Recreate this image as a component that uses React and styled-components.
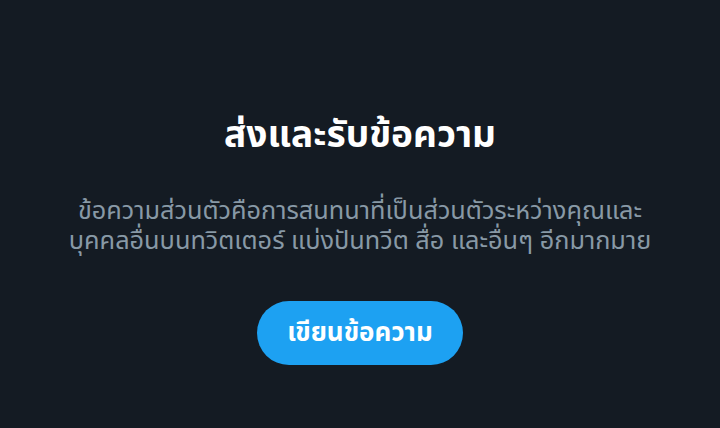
import React from "react";
import styled, { createGlobalStyle } from "styled-components";

const GlobalStyle = createGlobalStyle`
  html, body {
    margin: 0;
    padding: 0;
    background-color: #141b23;
  }
  body {
    font-family: "Noto Sans", "Noto Sans Thai", "DejaVu Sans", sans-serif;
  }
`;

const App = () => {
  return (
    <Container>
      <GlobalStyle />
      <Title>ส่งและรับข้อความ</Title>
      <Description>
        <Line>ข้อความส่วนตัวคือการสนทนาที่เป็นส่วนตัวระหว่างคุณและ</Line>
        <Line>บุคคลอื่นบนทวิตเตอร์ แบ่งปันทวีต สื่อ และอื่นๆ อีกมากมาย</Line>
      </Description>
      <Button>เขียนข้อความ</Button>
    </Container>
  );
};

const Container = styled.div`
  width: 720px;
  height: 428px;
  display: flex;
  flex-direction: column;
  align-items: center;
  padding-top: 111px;
  box-sizing: border-box;
`;

const Title = styled.h1`
  margin: 0;
  color: #ffffff;
  font-size: 37px;
  font-weight: 700;
  line-height: 44px;
`;

const Description = styled.div`
  margin-top: 39px;
  display: flex;
  flex-direction: column;
  align-items: center;
  color: #8899a6;
  font-size: 25.3px;
  text-align: center;
`;

const Line = styled.span`
  display: block;
  line-height: 30px;
  white-space: nowrap;
`;

const Button = styled.button`
  margin-top: 47px;
  width: 206px;
  height: 64px;
  border: none;
  border-radius: 32px;
  background-color: #1da1f2;
  color: #ffffff;
  font-family: inherit;
  font-size: 26px;
  font-weight: 700;
  cursor: pointer;
`;

export default App;
